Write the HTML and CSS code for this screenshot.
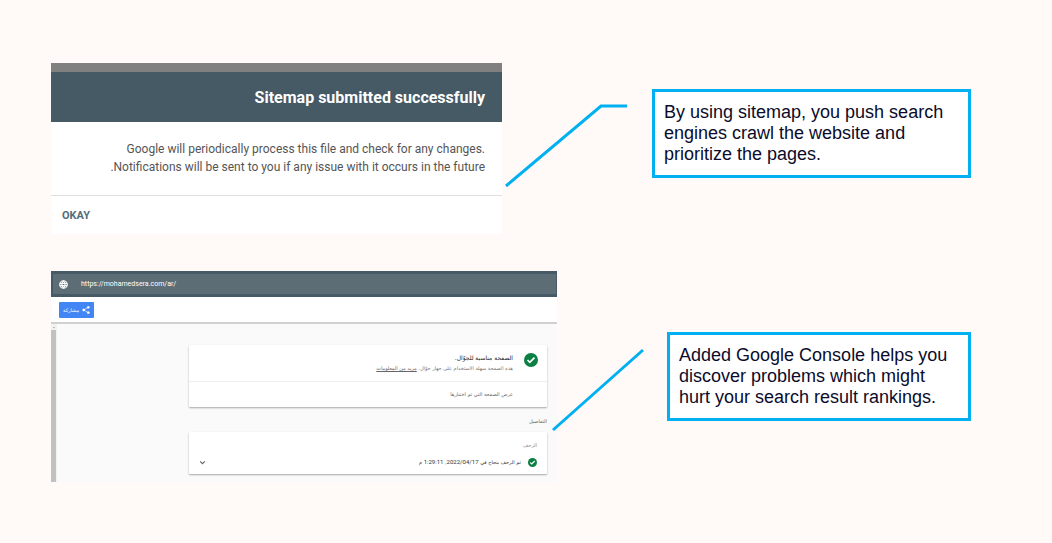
FILE: index.html
```html
<!DOCTYPE html>
<html lang="en">
<head>
<meta charset="utf-8">
<meta name="viewport" content="width=device-width, initial-scale=1">
<title>Sitemap and Google Console</title>
<link rel="stylesheet" href="styles.css">
</head>
<body>
<main class="slide">
  <section class="row row-sitemap">
    <div class="dialog">
      <h2 class="dialog-title">Sitemap submitted successfully</h2>
      <p class="dialog-text">Google will periodically process this file and check for any changes.<br>.Notifications will be sent to you if any issue with it occurs in the future</p>
      <div class="dialog-actions"><button class="okay" type="button">OKAY</button></div>
    </div>
    <svg class="connector" viewBox="0 0 150 171" aria-hidden="true"><path d="M4 123 99 43H125"/></svg>
    <p class="callout callout-sitemap">By using sitemap, you push search engines crawl the website and prioritize the pages.</p>
  </section>

  <section class="row row-console">
    <div class="console" dir="rtl" lang="ar">
      <div class="address" dir="ltr">
        <svg class="globe" viewBox="0 0 24 24" aria-hidden="true"><circle cx="12" cy="12" r="10"/><path d="M2 9h20M2 15h20M12 2c-5 6-5 14 0 20M12 2c5 6 5 14 0 20"/></svg>
        <span>https://mohamedsera.com/ar/</span>
      </div>
      <div class="toolbar">
        <button class="share" type="button">
          <svg class="share-icon" viewBox="0 0 24 24" aria-hidden="true"><path d="M19 4 5 12l14 8"/><circle cx="19" cy="4" r="3"/><circle cx="5" cy="12" r="3"/><circle cx="19" cy="20" r="3"/></svg>
          <span>مشاركة</span>
        </button>
      </div>
      <div class="viewport">
        <div class="content">
          <div class="card">
            <div class="result">
              <svg class="check check-large" viewBox="0 0 24 24" aria-hidden="true"><circle cx="12" cy="12" r="12"/><path d="m6 12 4 4 8-8"/></svg>
              <div>
                <h3 class="result-title">الصفحة مناسبة للجوّال.</h3>
                <p class="result-text">هذه الصفحة سهلة الاستخدام على جهاز جوّال. <a class="more" href="#">مزيد من المعلومات</a></p>
              </div>
            </div>
            <p class="tested">عرض الصفحة التي تم اختبارها</p>
          </div>
          <h4 class="details">التفاصيل</h4>
          <div class="card crawl">
            <h4 class="crawl-title">الزحف</h4>
            <div class="crawl-row">
              <svg class="check" viewBox="0 0 24 24" aria-hidden="true"><circle cx="12" cy="12" r="12"/><path d="m6 12 4 4 8-8"/></svg>
              <span>تم الزحف بنجاح في <bdi class="stamp" dir="ltr">2022/04/17</bdi>, <bdi class="stamp" dir="ltr">1:29:11</bdi> م</span>
              <svg class="chevron" viewBox="0 0 12 12" aria-hidden="true"><path d="m2 4 4 4 4-4"/></svg>
            </div>
          </div>
        </div>
        <div class="scrollbar"><span class="scroll-up"></span><span class="scroll-thumb"></span></div>
      </div>
    </div>
    <svg class="connector" viewBox="0 0 110 211" aria-hidden="true"><path d="M-4 159 86 79"/></svg>
    <p class="callout callout-console">Added Google Console helps you discover problems which might hurt your search result rankings.</p>
  </section>
</main>
</body>
</html>
```
FILE: styles.css
```css
* {
  box-sizing: border-box;
}

body {
  margin: 0;
  background: #fffaf7;
  font-family: "Liberation Sans", Arial, sans-serif;
}

h2, h3, h4, p {
  margin: 0;
}

.slide {
  display: flex;
  flex-direction: column;
  gap: 37px;
  padding: 63px 81px 61px 51px;
}

.row {
  display: grid;
  align-items: start;
}

.row-sitemap {
  grid-template-columns: 451fr 150fr 319fr;
}

.row-console {
  grid-template-columns: 506fr 110fr 304fr;
}

.connector {
  width: 100%;
  overflow: visible;
  fill: none;
  stroke: #00b0f0;
  stroke-width: 3;
}

.callout {
  border: 3px solid #00b0f0;
  background: #fff;
  color: #0b0b2b;
  font-size: 18px;
  line-height: 21px;
}

.callout-sitemap {
  margin-top: 26px;
  padding: 10px 20px 10px 9px;
}

.callout-console {
  margin-top: 61px;
  padding: 10px 20px 10px 9px;
}

/* Sitemap dialog */
.dialog {
  border-top: 9px solid #808080;
  background: #fff;
  font-family: Roboto, sans-serif;
}

.dialog-title {
  padding: 16px 17px 14px;
  background: #455a64;
  color: #fff;
  font-size: 16px;
  font-weight: 700;
  line-height: 20px;
  text-align: right;
}

.dialog-text {
  padding: 18px 17px 19px;
  color: #555;
  font-size: 12px;
  line-height: 18px;
  text-align: right;
}

.dialog-actions {
  display: flex;
  padding: 12px 11px 10px;
  border-top: 1px solid #e0e0e0;
}

.okay {
  padding: 0;
  border: 0;
  background: none;
  color: #546e7a;
  font: 700 11px/16px Roboto, sans-serif;
}

/* Console page */
.console {
  display: flex;
  flex-direction: column;
  background: #fafafa;
  color: #666;
  font-family: "DejaVu Sans", sans-serif;
  font-size: 5px;
  line-height: 10px;
}

.address {
  display: flex;
  align-items: center;
  gap: 13px;
  padding: 5px 6px;
  border: 3px solid #455a64;
  border-width: 3px 1px 3px 2px;
  background: #5c6d76;
  color: #fff;
  font: 7px/10px Roboto, sans-serif;
}

.globe {
  width: 9px;
  height: 9px;
  fill: none;
  stroke: #fff;
  stroke-width: 3;
}

.toolbar {
  display: flex;
  justify-content: flex-end;
  padding: 5px 8px 4px;
  border-bottom: 2px solid #d0d0d0;
  background: #fff;
}

.share {
  display: flex;
  align-items: center;
  gap: 3px;
  padding: 3px 4px;
  border: 0;
  border-radius: 1px;
  background: #4285f4;
  color: #fff;
  font: 5px/10px "DejaVu Sans", sans-serif;
}

.share-icon {
  flex: none;
  width: 8px;
  height: 8px;
  fill: #fff;
  stroke: #fff;
  stroke-width: 2;
}

.share-icon path {
  fill: none;
}

.viewport {
  display: flex;
}

.content {
  flex: 1;
  padding: 21px 10px 8px 132px;
}

.card {
  border-radius: 1px;
  background: #fff;
  box-shadow: 0 1px 2px #0005;
}

.result {
  display: flex;
  gap: 11px;
  padding: 7px 9px 8px;
  border-bottom: 1px solid #eee;
}

.check {
  flex: none;
  width: 9px;
  height: 9px;
  fill: #0b8043;
}

.check path {
  fill: none;
  stroke: #fff;
  stroke-width: 3;
}

.check-large {
  width: 14px;
  height: 14px;
  margin-top: 1px;
}

.result-title {
  color: #222;
  font-size: 6px;
  font-weight: 400;
  line-height: 11px;
}

.result-text {
  color: #777;
}

.more {
  color: #666;
}

.tested {
  padding: 7px 34px 8px;
}

.details {
  padding: 9px 0 6px;
  font-size: 5px;
  font-weight: 400;
}

.crawl {
  padding: 8px 10px 7px;
}

.crawl-title {
  color: #888;
  font-size: 5px;
  font-weight: 400;
}

.crawl-row {
  display: flex;
  align-items: center;
  gap: 7px;
  margin-top: 7px;
  color: #333;
}

.stamp {
  font-family: Roboto, sans-serif;
  font-size: 6px;
}

.chevron {
  width: 7px;
  height: 7px;
  margin-right: auto;
  fill: none;
  stroke: #666;
  stroke-width: 2;
}

.scrollbar {
  display: flex;
  flex-direction: column;
  width: 6px;
  background: #f1f1f1;
}

.scroll-up {
  align-self: center;
  margin: 2px;
  border: 1px solid transparent;
  border-bottom-color: #888;
}

.scroll-thumb {
  flex: 1;
  align-self: flex-end;
  width: 5px;
  background: #c1c1c1;
}
```
